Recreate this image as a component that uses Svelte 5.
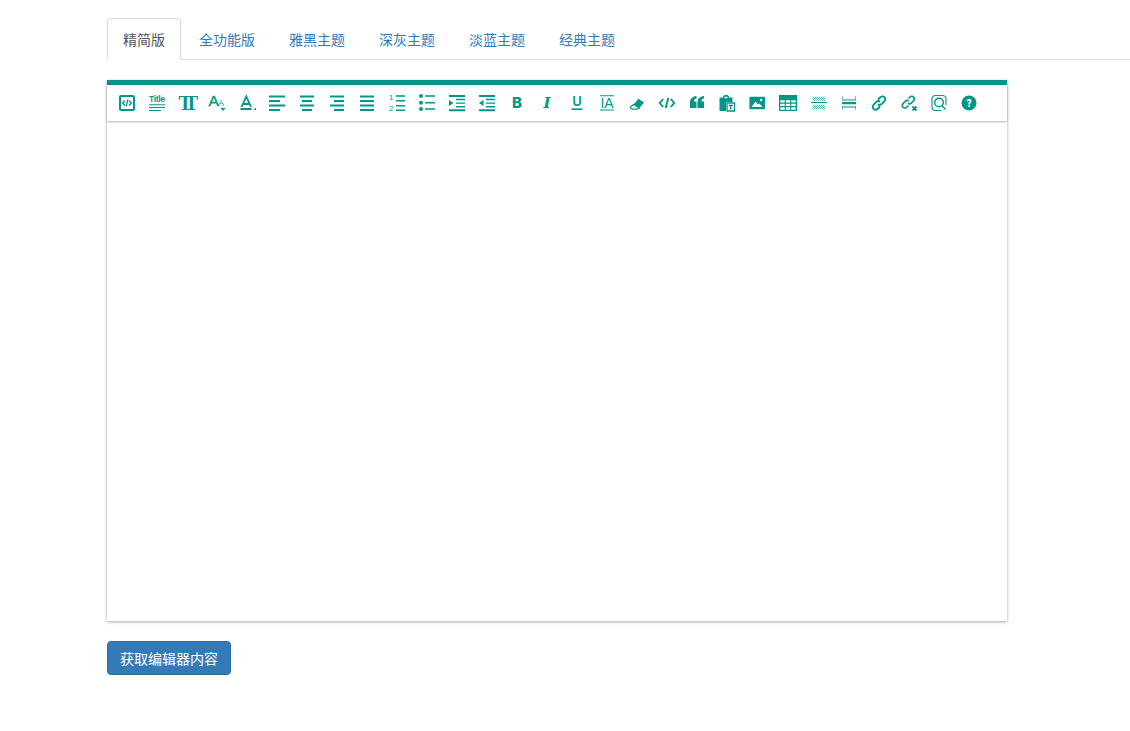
<script>
  const tabs = ['精简版', '全功能版', '雅黑主题', '深灰主题', '淡蓝主题', '经典主题'];
  let active = $state(0);
</script>

<div class="page">
  <ul class="tabs">
    {#each tabs as t, i}
      <li class:active={i === active}><a href="#top" onclick={(e) => { e.preventDefault(); active = i; }}>{t}</a></li>
    {/each}
  </ul>

  <div class="editor">
    <div class="toolbar">
      <button aria-label="html"><svg viewBox="0 0 20 20"><rect x="3" y="3" width="14" height="14" rx="1.2" class="s" stroke-width="2"/><path d="M7.800 7.500 5.600 10 7.800 12.500M12.200 7.500 14.400 10 12.200 12.500M10.900 6.500 9.100 13.500" class="s" stroke-width="1.300"/></svg></button>
      <button aria-label="title"><svg viewBox="0 0 20 20"><text x="10" y="9.400" text-anchor="middle" class="t sans" font-size="8.500" font-weight="700" textLength="16">Title</text><path d="M2 11.200h16v1H2zM2 14h16v1H2zM2 17h12v1H2z"/></svg></button>
      <button aria-label="font"><svg viewBox="0 0 20 20"><text x="1.500" y="16.500" class="t serif tt" font-size="20" font-weight="700">TT</text></svg></button>
      <button aria-label="size"><svg viewBox="0 0 20 20"><text x="1.500" y="13" class="t sans bolder" font-size="15.500" font-weight="400">A<tspan dx="-0.500" font-size="8.500" class="plain">A</tspan></text><path d="M13.500 15h5l-2.500 3z"/></svg></button>
      <button aria-label="color"><svg viewBox="0 0 20 20"><path d="M4.500 14 9.300 3.500 14 14M6.500 11h6" class="s" stroke-width="1.800"/><path d="M3.500 15h11v2h-11zM19 14.500V17h-2.500z"/></svg></button>
      <button aria-label="left"><svg viewBox="0 0 20 20"><path d="M2 2.500h16v2H2zM2 7h11v2H2zM2 11.500h16v2H2zM2 16h11v2H2z"/></svg></button>
      <button aria-label="center"><svg viewBox="0 0 20 20"><path d="M3 2.500h14v2H3zM5 7h10v2H5zM3 11.500h14v2H3zM5 16h10v2H5z"/></svg></button>
      <button aria-label="right"><svg viewBox="0 0 20 20"><path d="M3 2.500h14v2H3zM7 7h10v2H7zM3 11.500h14v2H3zM7 16h10v2H7z"/></svg></button>
      <button aria-label="justify"><svg viewBox="0 0 20 20"><path d="M3 2.500h14v2H3zM3 7h14v2H3zM3 11.500h14v2H3zM3 16h14v2H3z"/></svg></button>
      <button aria-label="ol"><svg viewBox="0 0 20 20"><text x="2" y="7" class="t sans" font-size="8">1</text><text x="2" y="17.800" class="t sans" font-size="8">2</text><path d="M9 2.200h9v1.600H9zM9 7h9v1.600H9zM9 12h9v1.600H9zM9 16.400h9V18H9z"/></svg></button>
      <button aria-label="ul"><svg viewBox="0 0 20 20"><circle cx="4" cy="3" r="2"/><circle cx="4" cy="9.700" r="2"/><circle cx="4" cy="16" r="2"/><path d="M8 2.200h10v1.600H8zM8 8.900h10v1.600H8zM8 15.200h10v1.600H8z"/></svg></button>
      <button aria-label="indent"><svg viewBox="0 0 20 20"><path d="M2 2h16v2H2zM2 16.200h16v2H2zM9 5.800h9v1.400H9zM9 9.400h9v1.400H9zM9 13h9v1.400H9zM2 7l4.500 3L2 13z"/></svg></button>
      <button aria-label="outdent"><svg viewBox="0 0 20 20"><path d="M2 2h16v2H2zM2 16.200h16v2H2zM9 5.800h9v1.400H9zM9 9.400h9v1.400H9zM9 13h9v1.400H9zM6.500 7 2 10l4.500 3z"/></svg></button>
      <button aria-label="bold"><svg viewBox="0 0 20 20"><text x="10" y="15.400" text-anchor="middle" class="t inter" font-size="15" font-weight="800">B</text></svg></button>
      <button aria-label="italic"><svg viewBox="0 0 20 20"><text x="10" y="15.400" text-anchor="middle" class="t dserif" font-size="15" font-weight="700" font-style="italic">I</text></svg></button>
      <button aria-label="underline"><svg viewBox="0 0 20 20"><text x="10" y="13.400" text-anchor="middle" class="t inter" font-size="13" font-weight="600">U</text><path d="M4.500 15.400h11V17h-11z"/></svg></button>
      <button aria-label="clear"><svg viewBox="0 0 20 20"><path d="M3 2.300h14v1H3zM3 16.600h14v1H3z"/><text x="10" y="14.800" text-anchor="middle" class="t sans" font-size="14" font-weight="400">IA</text></svg></button>
      <button aria-label="eraser"><svg viewBox="0 0 20 20"><path d="M11.500 5.800 17 9.500l-4.600 5.600-5.800-3.600z"/><path d="M6.600 11.500 3.600 13.800c-.5.500-.4 1 0 1.300l1.600 1.100h4.400l2.800-1.100z" class="s" stroke-width="1.200"/></svg></button>
      <button aria-label="code"><svg viewBox="0 0 20 20"><path d="M6.200 6 2.800 10l3.400 4M13.800 6l3.400 4-3.400 4M11.300 5 8.700 15" class="s" stroke-width="1.900"/></svg></button>
      <button aria-label="quote"><svg viewBox="0 0 20 20"><path d="M3 15V9.200C3 6 5 3.600 9.500 3v2.600C8 5.800 7 6.600 7 8.500h2.500V15zM10.500 15V9.200C10.500 6 12.500 3.600 17 3v2.600c-1.500.2-2.500 1-2.500 2.900H17V15z"/></svg></button>
      <button aria-label="paste"><svg viewBox="0 0 20 20"><path d="M3.500 4.500H6V4c0-1 .8-2 1.800-2h2.400c1 0 1.800 1 1.800 2v.5h2.500c.6 0 1 .4 1 1V9H9v9H3.500c-.6 0-1-.4-1-1V5.500c0-.6.4-1 1-1zM7.500 3.800v1.400h3V3.800z"/><path d="M10 10h7.500v8H10z" class="s" stroke-width="1.300"/><path d="M11.800 11.800h4V13h-1.300v3.400h-1.400V13h-1.300z"/></svg></button>
      <button aria-label="image"><svg viewBox="0 0 20 20"><rect x="2.400" y="3.700" width="15.600" height="12.600" rx="1"/><path d="M4.500 14 8.500 8.500l2.500 3 1.500-1 3 3.500z" fill="#fff"/><circle cx="14.200" cy="7" r="1.200" fill="#fff"/></svg></button>
      <button aria-label="table" class="wide"><svg viewBox="0 0 20 20"><path d="M1 2h18v16H1z"/><path d="M2.300 7.300h4.400v2.300H2.300zM7.800 7.300h4.400v2.300H7.800zM13.300 7.300h4.400v2.300h-4.400zM2.300 10.800h4.400v2.300H2.300zM7.800 10.800h4.400v2.300H7.800zM13.300 10.800h4.400v2.300h-4.400zM2.300 14.300h4.400v2.500H2.300zM7.800 14.300h4.400v2.500H7.800zM13.300 14.300h4.400v2.500h-4.400z" fill="#fff"/></svg></button>
      <button aria-label="hr"><svg viewBox="0 0 20 20"><defs><pattern id="hatch" width="2" height="2" patternUnits="userSpaceOnUse"><rect width="1" height="1" fill="#009688"/><rect x="1" y="1" width="1" height="1" fill="#009688"/></pattern></defs><rect x="3.500" y="3.700" width="13" height="4" class="h"/><rect x="3.500" y="11.700" width="13" height="4.600" class="h"/><path d="M2 9h16v1H2z"/></svg></button>
      <button aria-label="pagebreak"><svg viewBox="0 0 20 20"><path d="M3.500 3v4M16.500 3v4M3.500 13.500V17M16.500 13.500V17" class="s light" stroke-width="1"/><path d="M3 6.500h14v1H3zM3 9h14v2.300H3zM3 13.500h14v1H3z"/></svg></button>
      <button aria-label="link"><svg viewBox="0 0 20 20"><path d="M9 6.500l2-2c1.500-1.500 3.200-1.500 4.400-.3 1.200 1.200 1.200 2.900-.3 4.400l-2.300 2.300c-1.300 1.300-2.800 1.300-3.900.3M11 13.500l-2 2c-1.500 1.500-3.200 1.500-4.400.3-1.200-1.200-1.200-2.900.3-4.400l2.300-2.300c1.300-1.300 2.800-1.300 3.900-.3" class="s" stroke-width="1.900"/></svg></button>
      <button aria-label="unlink"><svg viewBox="0 0 20 20"><path d="M9.500 5.500l1.200-1.200c1.300-1.300 2.900-1.300 4-.2 1 1 1 2.500-.2 3.800l-2 2c-1.200 1.200-2.500 1.200-3.500.3M9.500 12.500 8 14c-1.300 1.300-2.900 1.300-4 .2-1-1-1-2.500.2-3.800l2-2c1.200-1.200 2.500-1.200 3.500-.3" class="s" stroke-width="1.600"/><path d="M13.500 13.500l4 4M17.500 13.500l-4 4" class="s" stroke-width="1.800"/></svg></button>
      <button aria-label="at"><svg viewBox="0 0 20 20"><path d="M17 12V6c0-2-1.500-3.500-3.500-3.500h-7C4.500 2.500 3 4 3 6v8c0 2 1.500 3.500 3.500 3.500H12" class="s" stroke-width="1.100"/><circle cx="10" cy="9.500" r="4.300" class="s" stroke-width="1.400"/><path d="M13 12.500l3.500 4" class="s" stroke-width="1.400"/></svg></button>
      <button aria-label="help"><svg viewBox="0 0 20 20"><circle cx="10" cy="10" r="7.500"/><text x="10" y="13.500" text-anchor="middle" class="t roboto q" font-size="10" font-weight="900">?</text></svg></button>
    </div>
    <div class="content"></div>
  </div>

  <button class="submit">获取编辑器内容</button>
</div>

<style>
  :global(body) {
    background: #fff;
    font-family: "Noto Sans CJK SC", "Liberation Sans", sans-serif;
    font-size: 14px;
    line-height: 20px;
    color: #333;
  }
  .page {
    padding: 18px 0 56px 107px;
  }
  .tabs {
    display: flex;
    list-style: none;
    margin: 0;
    padding: 0;
    height: 41px;
    border-bottom: 1px solid #ddd;
  }
  .tabs li {
    margin-right: 2px;
    height: 42px;
  }
  .tabs a {
    display: block;
    padding: 10px 15px;
    height: 20px;
    border: 1px solid transparent;
    border-radius: 4px 4px 0 0;
    color: #337ab7;
    text-decoration: none;
    line-height: 20px;
  }
  .tabs .active a {
    color: #555;
    background: #fff;
    border-color: #ddd #ddd #fff;
  }
  .editor {
    width: 900px;
    margin-top: 20px;
    background: #fff;
    border-top: 5px solid #009688;
    box-shadow: 0 1px 3px rgba(0, 0, 0, 0.35);
  }
  .toolbar {
    display: flex;
    height: 36px;
    padding-left: 5px;
    box-shadow: 0 1px 2px rgba(0, 0, 0, 0.3);
    position: relative;
  }
  .toolbar button {
    width: 30px;
    height: 36px;
    padding: 5px;
    margin: 0;
    border: 0;
    background: none;
    display: flex;
    align-items: center;
    justify-content: center;
  }
  .toolbar button.wide {
    width: 32px;
  }
  .toolbar svg {
    display: block;
    width: 20px;
    height: 20px;
    flex: none;
    fill: #009688;
    overflow: visible;
  }
  .s {
    fill: none;
    stroke: #009688;
  }
  .light {
    opacity: 0.55;
  }
  .h {
    fill: url(#hatch);
    opacity: 0.7;
  }
  .t {
    fill: #009688;
  }
  .tt {
    letter-spacing: -7px;
  }
  .bolder {
    stroke: #009688;
    stroke-width: 0.4px;
  }
  .plain {
    stroke: none;
  }
  .q {
    fill: #fff;
  }
  .sans {
    font-family: "Liberation Sans", sans-serif;
  }
  .serif {
    font-family: "Liberation Serif", serif;
  }
  .roboto {
    font-family: Roboto, sans-serif;
  }
  .inter {
    font-family: Inter, sans-serif;
  }
  .dserif {
    font-family: "DejaVu Serif", serif;
  }
  .content {
    height: 500px;
  }
  .submit {
    display: block;
    margin-top: 20px;
    height: 34px;
    width: 124px;
    padding: 6px 12px;
    background: #337ab7;
    border: 1px solid #2e6da4;
    border-radius: 4px;
    color: #fff;
    font: inherit;
    font-size: 14px;
    line-height: 20px;
    white-space: nowrap;
  }
</style>
